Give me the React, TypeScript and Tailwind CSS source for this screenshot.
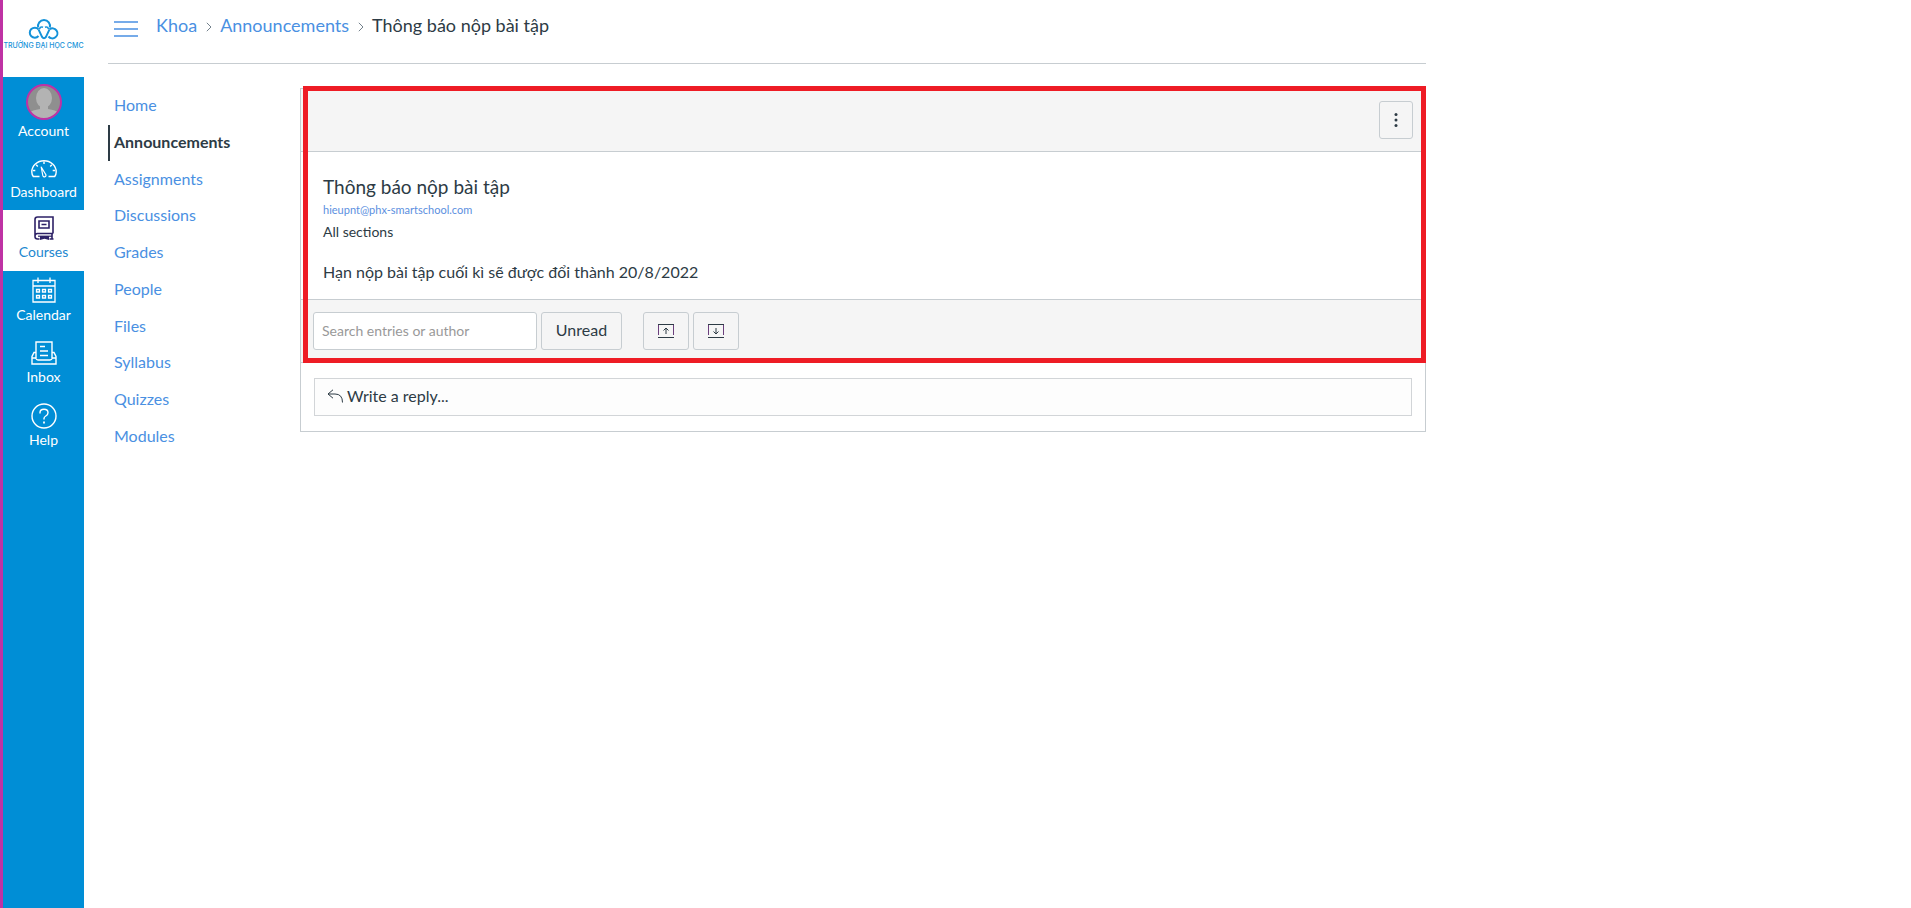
import type { ReactNode } from "react";
import clsx from "clsx";

const COURSE_LINKS = [
  "Home",
  "Announcements",
  "Assignments",
  "Discussions",
  "Grades",
  "People",
  "Files",
  "Syllabus",
  "Quizzes",
  "Modules",
];

function Logo() {
  return (
    <a href="#" aria-label="Trường Đại học CMC" className="flex h-[77px] flex-col items-center bg-white pt-[18px]">
      <svg width="32" height="22" viewBox="0 0 32 22" fill="none" stroke="#1592d9" strokeWidth="2">
        <path d="M10.2 9.5A6 6 0 1 1 21.8 9.5" />
        <path d="M10.500 11.300A5 5 0 1 0 10.500 18" />
        <path d="M10.500 11.300 14 18.800Q16 21.500 18 18.800L21.500 11.300" />
        <path d="M21.500 11.300A5 5 0 1 1 20.500 18.500" />
        <path d="M11.500 11Q12.500 8.200 15 9.200M20.500 11Q19.500 8.200 17 9.200" strokeWidth="1.600" />
      </svg>
      <span className="mt-px whitespace-nowrap font-[Inter,sans-serif] text-[7px] font-medium leading-[10px] text-[#1592d9]">
        TRƯỜNG ĐẠI HỌC CMC
      </span>
    </a>
  );
}

function Avatar() {
  return (
    <svg width="36" height="36" viewBox="0 0 36 36">
      <defs>
        <clipPath id="avatar-clip">
          <circle cx="18" cy="18" r="17" />
        </clipPath>
      </defs>
      <circle cx="18" cy="18" r="17" fill="#8f8f8f" />
      <g clipPath="url(#avatar-clip)" fill="#b3b3b3">
        <ellipse cx="18" cy="14" rx="8" ry="10" />
        <path d="M14 20h8v5q8 1 11 4v7H3v-7q3-3 11-4z" />
      </g>
      <circle cx="18" cy="18" r="17" fill="none" stroke="#bf32a4" strokeWidth="2" />
    </svg>
  );
}

function DashboardIcon() {
  return (
    <svg width="26" height="18" viewBox="0 0 26 18" fill="none" stroke="currentColor" strokeWidth="1.4">
      <path d="M8.500 16.500H2.300Q.8 14.500.8 12A12.200 11.200 0 0 1 25.200 12Q25.200 14.500 23.700 16.500H17.500" />
      <path d="M13 1.500V4M5.200 4.800 6.800 6.500M20.800 4.800 19.200 6.500M2 10.500H4.300M24 10.500H21.700" />
      <path d="M10.200 7 14.600 14.200A1.600 1.600 0 1 1 11.800 15.500Z" strokeWidth="1.200" strokeLinejoin="round" />
    </svg>
  );
}

function CoursesIcon() {
  return (
    <svg width="20" height="24" viewBox="0 0 20 24" fill="none" stroke="#2d2166" strokeWidth="1.600">
      <path d="M19 17.500V1H3.500Q1 1 1 3.500V20.500Q1 23 3.500 23H5.500M19 17.500H3.500Q1 17.500 1 20M18 17.500V23M15.500 23H19.500" />
      <path d="M5 5H15V12H5ZM7.500 8.500H12.500" />
      <path d="M4 20.200H18" strokeWidth="1.200" />
      <path d="M6 20H15V24L10.500 22.800 6 24Z" fill="#2d2166" stroke="none" />
    </svg>
  );
}

function CalendarIcon() {
  return (
    <svg width="24" height="26" viewBox="0 0 24 26" fill="none" stroke="currentColor" strokeWidth="1.300">
      <path d="M1 3.500H23V25H1ZM1 9H23M6 .5V6M18 .5V6" />
      <path d="M4.500 12.500H7.500V15H4.500ZM10.500 12.500H13.500V15H10.500ZM16.500 12.500H19.500V15H16.500ZM4.500 18.500H7.500V21H4.500ZM10.500 18.500H13.500V21H10.500ZM16.500 18.500H19.500V21H16.500Z" />
    </svg>
  );
}

function InboxIcon() {
  return (
    <svg width="26" height="24" viewBox="0 0 26 24" fill="none" stroke="currentColor" strokeWidth="1.400">
      <path d="M5 17V1H21V17M9 5.500H14M9 10H17M9 14.500H17" />
      <path d="M5 11.500H3L1 15.500V23H25V15.500L23 11.500H21" />
      <path d="M1 17H4.500Q5.500 19 7 19H19Q20.500 19 21.500 17H25" />
    </svg>
  );
}

function HelpIcon() {
  return (
    <svg width="26" height="26" viewBox="0 0 26 26" fill="none" stroke="currentColor" strokeWidth="1.400">
      <circle cx="13" cy="13" r="12" />
      <path d="M9 10.500V9.700Q9 6.300 13 6.300T17 9.800Q17 11.800 14.800 13Q13 14 13 15.500V16.500" />
      <path d="M13 18.500V20.500" strokeWidth="1.800" />
    </svg>
  );
}

const GLOBAL_LINKS: { label: string; icon: ReactNode; spacing: string; iconBox: string }[] = [
  { label: "Account", icon: <Avatar />, spacing: "pb-2", iconBox: "h-11 pt-1.5" },
  { label: "Dashboard", icon: <DashboardIcon />, spacing: "pb-2", iconBox: "h-[33px] pt-1.5" },
  { label: "Courses", icon: <CoursesIcon />, spacing: "pb-[9px]", iconBox: "h-8 pt-1" },
  { label: "Calendar", icon: <CalendarIcon />, spacing: "pb-2.5", iconBox: "h-[34px] pt-1" },
  { label: "Inbox", icon: <InboxIcon />, spacing: "pb-2.5", iconBox: "h-8 pt-1" },
  { label: "Help", icon: <HelpIcon />, spacing: "pb-2.5", iconBox: "h-[33px] pt-1" },
];

function GlobalNav() {
  return (
    <nav aria-label="Global" className="w-[84px] shrink-0 border-l-[3px] border-[#bf32a4] bg-[#008ed6]">
      <Logo />
      <ul>
        {GLOBAL_LINKS.map(({ label, icon, spacing, iconBox }) => (
          <li key={label}>
            <a
              href="#"
              className={clsx(
                "flex flex-col items-center text-sm leading-5",
                spacing,
                label === "Courses" ? "bg-white text-[#2287cf]" : "text-white"
              )}
            >
              <span className={clsx("flex items-center justify-center", iconBox)}>{icon}</span>
              {label}
            </a>
          </li>
        ))}
      </ul>
    </nav>
  );
}

function Chevron() {
  return (
    <svg width="6" height="10" viewBox="0 0 6 10" fill="none" stroke="#73818c" strokeWidth="1">
      <path d="M.8.8 5 5 .8 9.200" />
    </svg>
  );
}

function Header() {
  return (
    <header className="flex h-16 items-start border-b border-[#c7cdd1] pl-1.5">
      <button type="button" aria-label="Toggle course menu" className="mt-[21px] text-[#4a90e2]">
        <svg width="24" height="16" viewBox="0 0 24 16" fill="none" stroke="currentColor" strokeWidth="1.500">
          <path d="M0 1H24M0 8H24M0 15H24" />
        </svg>
      </button>
      <nav aria-label="Breadcrumb" className="ml-[18px] mt-[13px] flex items-center text-lg leading-6">
        <a href="#" className="text-[#4a90e2]">Khoa</a>
        <span className="ml-[9px] mr-2 pt-1"><Chevron /></span>
        <a href="#" className="text-[#4a90e2]">Announcements</a>
        <span className="ml-[9px] mr-2 pt-1"><Chevron /></span>
        <span>Thông báo nộp bài tập</span>
      </nav>
    </header>
  );
}

function CourseNav() {
  return (
    <nav aria-label="Course" className="w-48 shrink-0">
      <ul className="grid h-[367px] grid-rows-10">
        {COURSE_LINKS.map((label) => (
          <li key={label} className="flex">
            <a
              href="#"
              className={clsx(
                "flex items-center border-l-2 pb-0.5 pl-1 text-base",
                label === "Announcements"
                  ? "border-[#2d3b45] font-bold text-[#2d3b45]"
                  : "border-transparent text-[#4a90e2]"
              )}
            >
              {label}
            </a>
          </li>
        ))}
      </ul>
    </nav>
  );
}

function ToolButton({ label, className, children }: { label: string; className: string; children: ReactNode }) {
  return (
    <button
      type="button"
      aria-label={label}
      className={clsx(
        "flex h-[38px] items-center justify-center rounded-[3px] border border-[#c7cdd1] bg-[#f5f5f5]",
        className
      )}
    >
      {children}
    </button>
  );
}

function TrayIcon({ arrow }: { arrow: string }) {
  return (
    <svg width="16" height="14" viewBox="0 0 16 14" fill="none" stroke="#2d3b45" strokeWidth="1">
      <path d="M.5 11V.5H15.500V11" stroke="#6b3f7c" />
      <path d="M0 .5H16M0 13.500H16" />
      <path d={arrow} />
    </svg>
  );
}

function Discussion() {
  return (
    <main className="relative min-w-0 flex-1 border border-[#c7cdd1]">
      <div className="flex h-[62px] items-center justify-end bg-[#f5f5f5] pr-3">
        <ToolButton label="Manage discussion" className="w-[34px]">
          <svg width="4" height="16" viewBox="0 0 4 16" fill="#2d3b45">
            <circle cx="2" cy="2.500" r="1.500" />
            <circle cx="2" cy="8" r="1.500" />
            <circle cx="2" cy="13.500" r="1.500" />
          </svg>
        </ToolButton>
      </div>

      <article className="border-y border-[#c7cdd1] px-[22px] pb-[15px] pt-[22px]">
        <h1 className="text-[19px] leading-[26px]">Thông báo nộp bài tập</h1>
        <a href="#" className="block text-[11px] leading-5 text-[#5b8fe0]">hieupnt@phx-smartschool.com</a>
        <p className="text-sm leading-6">All sections</p>
        <p className="pt-4 text-base leading-6">Hạn nộp bài tập cuối kì sẽ được đổi thành 20/8/2022</p>
      </article>

      <div className="flex h-[63px] items-center border-b border-[#c7cdd1] bg-[#f5f5f5] pl-3">
        <input
          type="text"
          aria-label="Search entries or author"
          placeholder="Search entries or author"
          className="h-[38px] w-56 rounded-[3px] border border-[#c7cdd1] bg-white px-2 pb-0.5 text-sm placeholder:text-[#999]"
        />
        <ToolButton label="Unread" className="ml-1 w-[81px] pb-0.5">Unread</ToolButton>
        <ToolButton label="Collapse replies" className="ml-[21px] w-[46px]">
          <TrayIcon arrow="M8 10V4M5.500 6.500 8 4 10.500 6.500" />
        </ToolButton>
        <ToolButton label="Expand replies" className="ml-1 w-[46px]">
          <TrayIcon arrow="M8 4V10M5.500 7.500 8 10 10.500 7.500" />
        </ToolButton>
      </div>

      <div className="px-[13px] py-[15px]">
        <button
          type="button"
          className="flex h-[38px] w-full items-center gap-1 border border-[#d2d5d8] bg-[#fdfdfd] pb-0.5 pl-3 text-left"
        >
          <svg width="16" height="14" viewBox="0 0 16 14" fill="none" stroke="#2d3b45" strokeWidth="1">
            <path d="M6 .8 1 5 6 9.200M1 5H8Q15.500 5 15.500 13.500" />
          </svg>
          Write a reply...
        </button>
      </div>

      {/* highlight frame */}
      <div className="pointer-events-none absolute -right-px -top-[3px] left-[2px] h-[277px] border-[5px] border-[#ee1c25]" />
    </main>
  );
}

export default function App() {
  return (
    <div className="flex min-h-screen bg-white font-[Lato,'Noto_Sans',sans-serif] text-base text-[#2d3b45]">
      <GlobalNav />
      <div className="ml-6 max-w-[1318px] flex-1">
        <Header />
        <div className="flex items-start pt-6">
          <CourseNav />
          <Discussion />
        </div>
      </div>
    </div>
  );
}
